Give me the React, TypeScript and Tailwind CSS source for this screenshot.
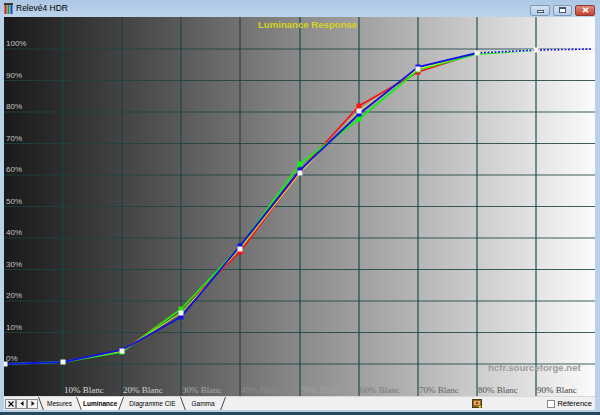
import React from 'react';

const XS = [1, 59, 118, 177, 236, 296, 355, 414, 473, 532, 590];
const RED = [347, 345, 334, 292, 235, 154, 89, 55, 36, 33, 32];
const GREEN = [347, 345, 335, 292, 230, 147, 102, 53, 37, 33, 32];
const BLUE = [347, 345, 333, 300, 229, 153, 97, 50, 36, 33, 32];
const LUMA = [347, 345, 334, 296, 232, 156, 94, 52, 36, 33, 32];

const PERCENTS = ['100%', '90%', '80%', '70%', '60%', '50%', '40%', '30%', '20%', '10%', '0%'];
const BLANC_COLORS = ['#dcdcdc', '#cfcfcf', '#a9a9a9', '#8c8c8c', '#a2a2a2', '#7a7a7a', '#666666', '#555555', '#444444'];

function pts(ys: number[], from = 0, to = 10) {
  return XS.slice(from, to + 1)
    .map((x, i) => `${x},${ys[i + from]}`)
    .join(' ');
}

function LuminanceChart() {
  const vLines = [1, 2, 3, 4, 5, 6, 7, 8, 9].map((k) => Math.round(59.1 * k));
  const hLines = Array.from({ length: 11 }, (_, i) => 32 + 31.5 * i);

  return (
    <svg width="591" height="379" viewBox="0 0 591 379" className="block">
      {vLines.map((x) => (
        <line key={`v${x}`} x1={x} y1={0} x2={x} y2={379} stroke="#1a4444" strokeOpacity={0.75} strokeWidth={1.5} />
      ))}
      {hLines.map((y) => (
        <line key={`h${y}`} x1={0} y1={y} x2={591} y2={y} stroke="#1a4444" strokeOpacity={0.85} strokeWidth={1.2} />
      ))}

      {PERCENTS.map((p, i) => (
        <text
          key={p}
          x={2}
          y={32 + 31.5 * i - 3}
          fontFamily="'Liberation Sans', Arial, sans-serif"
          fontSize={8}
          fill="#c4c4c4"
        >
          {p}
        </text>
      ))}

      {vLines.map((x, i) => (
        <text
          key={`b${x}`}
          x={x + 1}
          y={376}
          fontFamily="'Liberation Serif', 'Times New Roman', serif"
          fontSize={9}
          fill={BLANC_COLORS[i]}
        >
          {`${(i + 1) * 10}% Blanc`}
        </text>
      ))}

      <text
        x={254}
        y={11}
        fontFamily="'Liberation Sans', Arial, sans-serif"
        fontSize={9.6}
        fontWeight="bold"
        fill="#d4d41c"
      >
        Luminance Response
      </text>

      <text
        x={484}
        y={354}
        fontFamily="'Liberation Sans', Arial, sans-serif"
        fontSize={9.6}
        fontWeight="bold"
        fill="#9c9c9c"
      >
        hcfr.sourceforge.net
      </text>

      <polyline points={pts(RED, 0, 8)} fill="none" stroke="#ff1010" strokeWidth={1.6} />
      <polyline points={pts(GREEN, 0, 9)} fill="none" stroke="#10f010" strokeWidth={1.8} />
      <polyline points={pts(LUMA, 0, 8)} fill="none" stroke="#f0f020" strokeWidth={1} />
      <polyline points={pts(BLUE, 0, 8)} fill="none" stroke="#1010e8" strokeWidth={1.8} />
      <polyline points={pts(BLUE, 8, 10)} fill="none" stroke="#ffffff" strokeWidth={1.6} />
      <polyline points={pts(BLUE, 8, 10)} fill="none" stroke="#1010e8" strokeWidth={1.6} strokeDasharray="2 1.5" />

      {XS.map((x, i) => (
        <g key={`m${x}`}>
          {i >= 2 && i <= 7 && (
            <>
              <rect x={x - 2.5} y={RED[i] - 2.5} width={5} height={5} fill="#ff1010" />
              <rect x={x - 2.5} y={GREEN[i] - 2.5} width={5} height={5} fill="#10f010" />
              <rect x={x - 2.5} y={BLUE[i] - 2.5} width={5} height={5} fill="#1010e8" />
            </>
          )}
          <rect x={x - 2.5} y={LUMA[i] - 2.5} width={5} height={5} fill="#f4f4f4" />
        </g>
      ))}
    </svg>
  );
}

function Slant({ dir, fill }: { dir: 'l' | 'r'; fill?: boolean }) {
  return (
    <svg width="6" height="14" viewBox="0 0 6 14" className="block shrink-0">
      {fill && <polygon points={dir === 'l' ? '0,0 6,0 6,14 5,14' : '0,0 6,0 1,14 0,14'} fill="#ffffff" />}
      {dir === 'l' ? (
        <line x1={0.5} y1={0} x2={5.5} y2={13.5} stroke="#333" strokeWidth={0.9} />
      ) : (
        <line x1={5.5} y1={0} x2={0.5} y2={13.5} stroke="#333" strokeWidth={0.9} />
      )}
    </svg>
  );
}

function NavButton({ children }: { children: React.ReactNode }) {
  return (
    <div className="w-[11px] h-[10px] border border-[#8a8a8a] bg-[#f4f4f4] flex items-center justify-center text-[7px] leading-none text-black">
      {children}
    </div>
  );
}

function TabBar() {
  return (
    <div
      className="h-[14px] bg-[#f0f0f0] border-t border-[#d8d8d8] flex items-center text-[6.5px] text-black"
      style={{ fontFamily: "'Liberation Sans', Arial, sans-serif" }}
    >
      <div className="flex items-center ml-[1px]">
        <NavButton>
          <svg width="6" height="6" viewBox="0 0 6 6">
            <path d="M0.5 0.5 L5.5 5.5 M5.5 0.5 L0.5 5.5" stroke="#000" strokeWidth={1.1} />
          </svg>
        </NavButton>
        <NavButton>
          <svg width="4" height="5" viewBox="0 0 4 5">
            <polygon points="3.5,0 0.5,2.5 3.5,5" fill="#000" />
          </svg>
        </NavButton>
        <NavButton>
          <svg width="4" height="5" viewBox="0 0 4 5">
            <polygon points="0.5,0 3.5,2.5 0.5,5" fill="#000" />
          </svg>
        </NavButton>
      </div>
      <Slant dir="l" />
      <span className="pl-[3px] pr-[4px]">Mesures</span>
      <Slant dir="l" fill />
      <span className="bg-white h-full flex items-center px-[1px] font-bold">Luminance</span>
      <Slant dir="r" fill />
      <span className="px-[5px]">Diagramme CIE</span>
      <Slant dir="l" />
      <span className="px-[5px]">Gamma</span>
      <Slant dir="r" />
      <div className="flex-1" />
      <svg width="10" height="10" viewBox="0 0 10 10" className="mr-[65px]">
        <rect x="0.5" y="0.5" width="9" height="8" fill="#8a6a2a" stroke="#4a3a10" />
        <rect x="2" y="2" width="6" height="4" fill="#d8b860" />
        <circle cx="5" cy="4" r="1.3" fill="#d02020" />
        <polygon points="6,7 9.5,7 8,9.8" fill="#f0e020" />
      </svg>
      <div className="w-[8px] h-[8px] border border-[#8a8a8a] bg-white mr-[2px]" />
      <span className="text-[7.5px] mr-[3px]">Référence</span>
    </div>
  );
}

export default function App() {
  return (
    <div className="w-[600px] h-[415px] bg-[#b9d1ea] flex flex-col overflow-hidden">
      <div className="h-[17px] flex items-center bg-gradient-to-b from-[#adc7e4] to-[#bcd3ec]">
        <svg width="9" height="11" viewBox="0 0 9 11" className="ml-[4px]">
          <rect x="0" y="0" width="9" height="2" fill="#333" />
          <rect x="0.5" y="2" width="2" height="9" fill="#d02020" />
          <rect x="3.5" y="2" width="2" height="9" fill="#20a020" />
          <rect x="6.5" y="2" width="2" height="9" fill="#2040d0" />
        </svg>
        <span
          className="ml-[3px] text-[8.5px] text-black"
          style={{ fontFamily: "'Liberation Sans', Arial, sans-serif" }}
        >
          Relevé4 HDR
        </span>
        <div className="flex-1" />
        <div className="flex items-center gap-[3px] mr-[5px] mt-[3px]">
          <div className="w-[20px] h-[11px] rounded-[2px] border border-[#7d98bd] bg-gradient-to-b from-[#d5e3f2] to-[#b6cbe4] flex items-end justify-center pb-[2px]">
            <div className="w-[7px] h-[3px] bg-white border border-[#44556d]" />
          </div>
          <div className="w-[19px] h-[11px] rounded-[2px] border border-[#7d98bd] bg-gradient-to-b from-[#d5e3f2] to-[#b6cbe4] flex items-center justify-center">
            <div className="w-[7px] h-[6px] bg-white border border-[#44556d] border-t-2" />
          </div>
          <div className="w-[20px] h-[11px] rounded-[2px] border border-[#8e3a2e] bg-gradient-to-b from-[#e0887a] to-[#c5432f] flex items-center justify-center">
            <svg width="7" height="6" viewBox="0 0 7 6">
              <path d="M1 0.8 L6 5.2 M6 0.8 L1 5.2" stroke="#fff" strokeWidth={1.6} />
            </svg>
          </div>
        </div>
      </div>
      <div className="flex-1 flex px-[4px] pr-[5px]">
        <div className="flex-1 flex flex-col">
          <div className="h-[379px] bg-gradient-to-r from-[#1a1a1a] via-[#8a8a8a] to-[#fbfbfb]">
            <LuminanceChart />
          </div>
          <TabBar />
        </div>
      </div>
      <div className="h-[2px] bg-[#b9d1ea]" />
      <div className="h-[3px] bg-[#27495a]" />
    </div>
  );
}
